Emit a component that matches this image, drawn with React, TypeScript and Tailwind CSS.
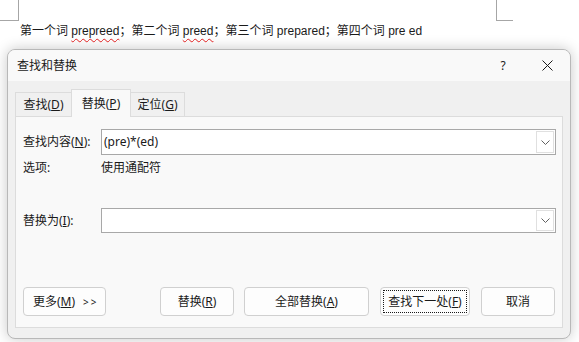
import React from "react";

const font = { fontFamily: '"Noto Sans", "Noto Sans CJK SC", sans-serif' };
const docFont = { fontFamily: '"Liberation Sans", "Noto Sans CJK SC", sans-serif' };

function Chevron() {
  return (
    <svg width="9" height="5" viewBox="0 0 9 5" className="block">
      <path d="M0.5 0.5 L4.5 4.5 L8.5 0.5" fill="none" stroke="#606060" strokeWidth="1" />
    </svg>
  );
}

function Combo({ value, h }: { value: string; h: string }) {
  return (
    <div className={`flex-1 ${h} flex border border-[#a8a8a8] bg-white`}>
      <div className="flex-1 flex items-center pl-[2px] text-[12px] text-[#1a1a1a] leading-[16px]">{value}</div>
      <div className="w-[18px] my-[1px] mr-[1px] border border-[#e0e0e0] bg-white flex items-center justify-center">
        <Chevron />
      </div>
    </div>
  );
}

function Btn({ children, className = "" }: { children: React.ReactNode; className?: string }) {
  return (
    <div
      className={`h-[29px] rounded-[4px] border border-[#d0d0d0] bg-[#fdfdfd] flex items-center justify-center text-[12px] text-[#1a1a1a] leading-[16px] ${className}`}
    >
      {children}
    </div>
  );
}

export default function App() {
  return (
    <div className="w-[579px] h-[342px] bg-white overflow-hidden relative" style={font}>
      <div className="relative h-[49px]">
        <div className="absolute left-0 top-0 w-[19px] h-[21px] border-r border-b border-[#a6a6a6]" />
        <div className="absolute left-[496px] top-0 w-[17px] h-[21px] border-l border-b border-[#a6a6a6]" />
        <div className="pl-[20px] pt-[23px] text-[12px] leading-[16px] text-[#1a1a1a] whitespace-nowrap" style={docFont}>
          第一个词 <span className="underline decoration-wavy decoration-[#e02020] underline-offset-[3px] decoration-1">prepreed</span>；第二个词{" "}
          <span className="underline decoration-wavy decoration-[#e02020] underline-offset-[3px] decoration-1">preed</span>；第三个词 prepared；第四个词 pre ed
        </div>
      </div>

      <div className="ml-[7px] w-[564px] h-[290px] rounded-[8px] border border-[#b8b8b8] bg-[#f0f0f0] shadow-[0_0_14px_rgba(0,0,0,0.22)] overflow-hidden flex flex-col">
        <div className="h-[31px] bg-[#f9f9f9] flex items-center text-[12px] leading-[16px] text-[#1a1a1a]">
          <div className="pl-[9px] flex-1">查找和替换</div>
          <div className="w-[22px] text-center mr-[22px]">?</div>
          <div className="w-[22px] flex items-center justify-center mr-[12px]">
            <svg width="11" height="11" viewBox="0 0 11 11">
              <path d="M0.5 0.5 L10.5 10.5 M10.5 0.5 L0.5 10.5" stroke="#1a1a1a" strokeWidth="1" />
            </svg>
          </div>
        </div>

        <div className="flex-1 px-[7px] flex flex-col">
          <div className="h-[35px] flex items-end text-[12px] leading-[16px] text-[#1a1a1a]">
            <div className="w-[57px] h-[24px] border border-b-0 border-[#dcdcdc] bg-[#f0f0f0] flex items-center justify-center">
              查找(<u>D</u>)
            </div>
            <div className="w-[60px] h-[28px] border border-b-0 border-[#dcdcdc] bg-[#f9f9f9] flex items-center justify-center -mb-[1px] relative z-10 -mx-[1px]">
              替换(<u>P</u>)
            </div>
            <div className="w-[55px] h-[24px] border border-b-0 border-[#dcdcdc] bg-[#f0f0f0] flex items-center justify-center">
              定位(<u>G</u>)
            </div>
          </div>

          <div className="h-[212px] border border-[#dcdcdc] bg-[#f9f9f9] pl-[7px] pr-[6px] pt-[12px] flex flex-col text-[12px] leading-[16px] text-[#1a1a1a]">
            <div className="h-[26px] flex items-center">
              <div className="w-[78px]">查找内容(<u>N</u>):</div>
              <Combo value="(pre)*(ed)" h="h-[26px]" />
            </div>
            <div className="h-[16px] mt-[5px] flex items-center">
              <div className="w-[78px]">选项:</div>
              <div>使用通配符</div>
            </div>
            <div className="h-[25px] mt-[32px] flex items-center">
              <div className="w-[78px]">替换为(<u>I</u>):</div>
              <Combo value="" h="h-[25px]" />
            </div>
            <div className="mt-[54px] flex">
              <Btn className="w-[83px] justify-start pl-[9px]">
                <span>更多(<u>M</u>)</span>
                <span className="ml-[8px] text-[10px] tracking-[2px]">&gt;&gt;</span>
              </Btn>
              <Btn className="w-[74px] ml-[54px]">
                替换(<u>R</u>)
              </Btn>
              <Btn className="w-[125px] ml-[10px]">
                全部替换(<u>A</u>)
              </Btn>
              <Btn className="w-[90px] ml-[11px] border-[#0067c0] relative">
                <span className="absolute inset-[2px] border border-dotted border-[#1a1a1a]" />
                查找下一处(<u>F</u>)
              </Btn>
              <Btn className="w-[74px] ml-[11px]">取消</Btn>
            </div>
          </div>
        </div>
      </div>
    </div>
  );
}
